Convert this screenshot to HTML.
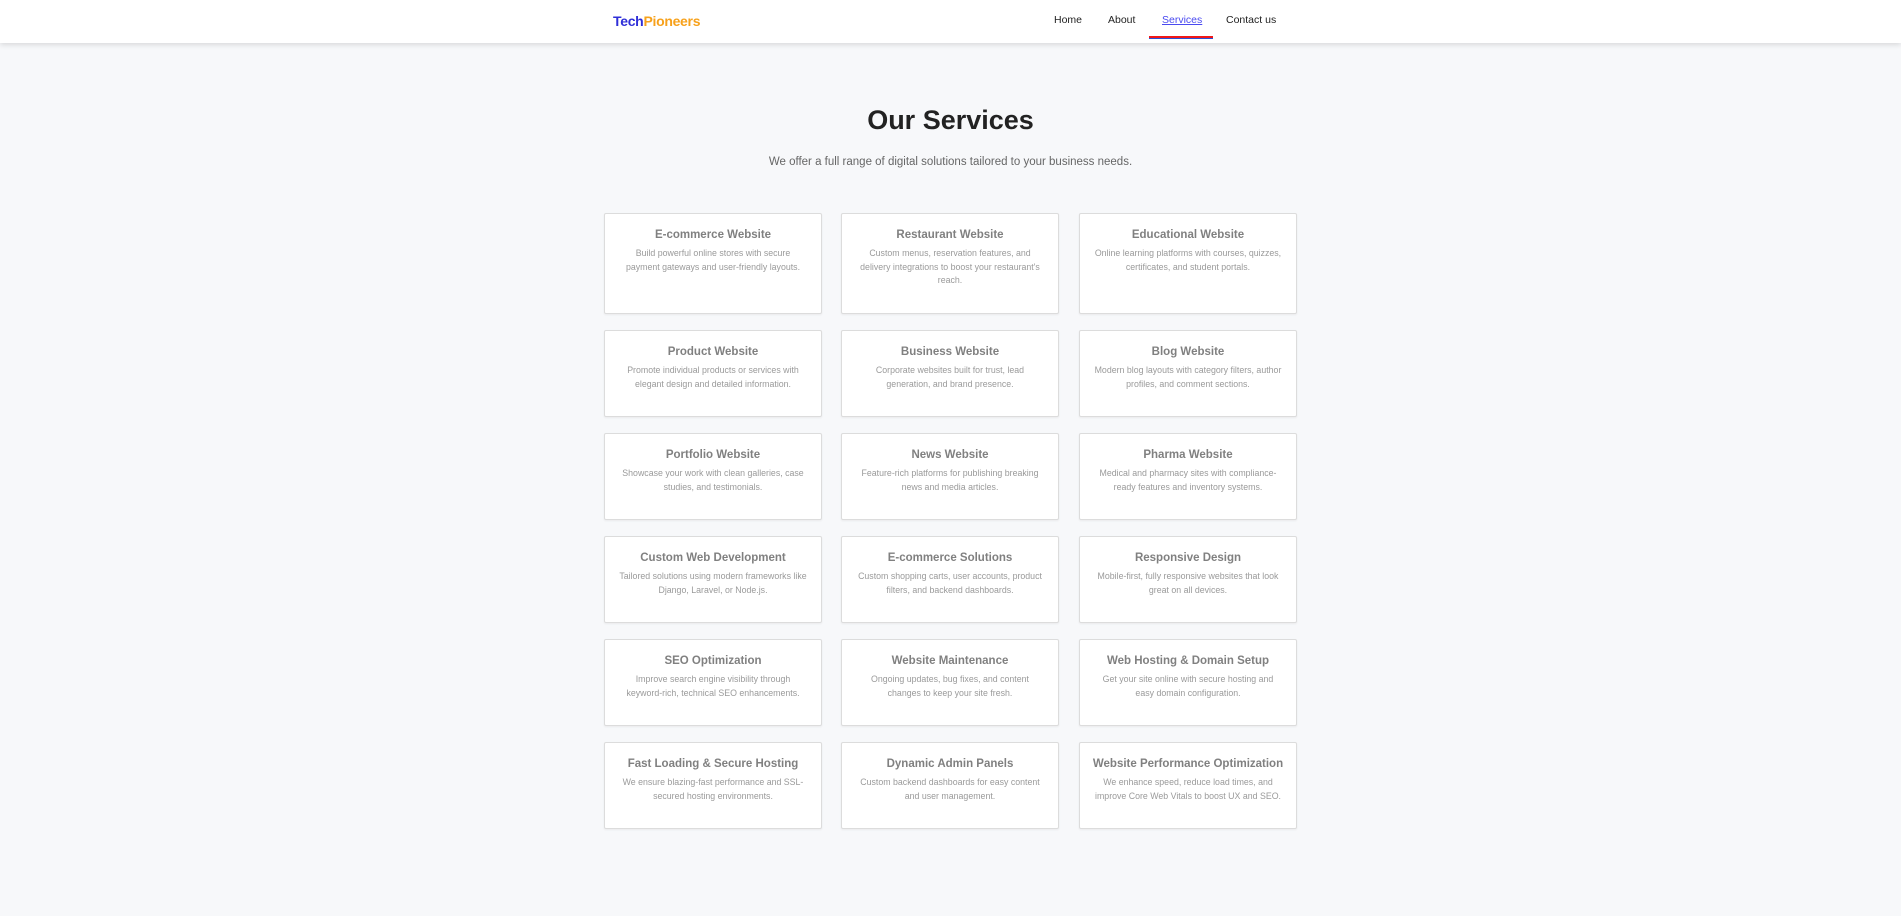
<!DOCTYPE html>
<html><head><meta charset="utf-8"><style>
*{margin:0;padding:0;box-sizing:border-box}
body{width:1901px;height:916px;background:#f7f8fa;font-family:"Liberation Sans",sans-serif;position:relative;overflow:hidden}
.nav{position:absolute;left:0;top:0;width:1901px;height:43px;background:#fff;box-shadow:0 2px 5px rgba(0,0,0,.12)}
.logo{position:absolute;left:613px;top:13px;font-weight:bold;font-size:14px;letter-spacing:-0.3px}
.logo .a{color:#2f2fd8}.logo .b{color:#f7a11b}
.nav a{position:absolute;top:14px;font-size:10.5px;color:#222;text-decoration:none}
.nav a.act{color:#4a4af0;text-decoration:underline}
.bar{position:absolute;left:1149px;top:36px;width:64px;height:3px;background:#f01818;border-bottom:1px solid #2a4fd8}
h1{position:absolute;left:0;width:1901px;top:105px;text-align:center;font-size:27px;color:#222;font-weight:bold}
.sub{position:absolute;left:0;width:1901px;top:156px;text-align:center;font-size:11.5px;color:#666}
.card{position:absolute;width:218px;background:#fff;border:1px solid #dcdcdc;border-radius:2px;box-shadow:0 1px 2px rgba(0,0,0,.06);text-align:center;padding:15px 14px 0}
.card h3{font-size:11.5px;color:#808080;font-weight:bold;margin-bottom:6px;white-space:nowrap;margin-left:-10px;margin-right:-10px}
.card p{font-size:8.8px;line-height:13.5px;color:#9a9a9a}
</style></head><body>
<div class="nav">
<div class="logo"><span class="a">Tech</span><span class="b">Pioneers</span></div>
<a style="left:1054px">Home</a>
<a style="left:1108px">About</a>
<a class="act" style="left:1162px">Services</a>
<a style="left:1226px">Contact us</a>
<div class="bar"></div>
</div>
<h1>Our Services</h1>
<div class="sub">We offer a full range of digital solutions tailored to your business needs.</div>

<div class="card" style="left:604px;top:213px;height:101px"><h3>E-commerce Website</h3><p>Build powerful online stores with secure payment gateways and user-friendly layouts.</p></div>
<div class="card" style="left:841px;top:213px;height:101px"><h3>Restaurant Website</h3><p>Custom menus, reservation features, and delivery integrations to boost your restaurant's reach.</p></div>
<div class="card" style="left:1079px;top:213px;height:101px"><h3>Educational Website</h3><p>Online learning platforms with courses, quizzes, certificates, and student portals.</p></div>

<div class="card" style="left:604px;top:330px;height:87px"><h3>Product Website</h3><p>Promote individual products or services with elegant design and detailed information.</p></div>
<div class="card" style="left:841px;top:330px;height:87px"><h3>Business Website</h3><p>Corporate websites built for trust, lead generation, and brand presence.</p></div>
<div class="card" style="left:1079px;top:330px;height:87px"><h3>Blog Website</h3><p>Modern blog layouts with category filters, author profiles, and comment sections.</p></div>

<div class="card" style="left:604px;top:433px;height:87px"><h3>Portfolio Website</h3><p>Showcase your work with clean galleries, case studies, and testimonials.</p></div>
<div class="card" style="left:841px;top:433px;height:87px"><h3>News Website</h3><p>Feature-rich platforms for publishing breaking news and media articles.</p></div>
<div class="card" style="left:1079px;top:433px;height:87px"><h3>Pharma Website</h3><p>Medical and pharmacy sites with compliance-ready features and inventory systems.</p></div>

<div class="card" style="left:604px;top:536px;height:87px"><h3>Custom Web Development</h3><p>Tailored solutions using modern frameworks like Django, Laravel, or Node.js.</p></div>
<div class="card" style="left:841px;top:536px;height:87px"><h3>E-commerce Solutions</h3><p>Custom shopping carts, user accounts, product filters, and backend dashboards.</p></div>
<div class="card" style="left:1079px;top:536px;height:87px"><h3>Responsive Design</h3><p>Mobile-first, fully responsive websites that look great on all devices.</p></div>

<div class="card" style="left:604px;top:639px;height:87px"><h3>SEO Optimization</h3><p>Improve search engine visibility through keyword-rich, technical SEO enhancements.</p></div>
<div class="card" style="left:841px;top:639px;height:87px"><h3>Website Maintenance</h3><p>Ongoing updates, bug fixes, and content changes to keep your site fresh.</p></div>
<div class="card" style="left:1079px;top:639px;height:87px"><h3>Web Hosting &amp; Domain Setup</h3><p>Get your site online with secure hosting and easy domain configuration.</p></div>

<div class="card" style="left:604px;top:742px;height:87px"><h3>Fast Loading &amp; Secure Hosting</h3><p>We ensure blazing-fast performance and SSL-secured hosting environments.</p></div>
<div class="card" style="left:841px;top:742px;height:87px"><h3>Dynamic Admin Panels</h3><p>Custom backend dashboards for easy content and user management.</p></div>
<div class="card" style="left:1079px;top:742px;height:87px"><h3>Website Performance Optimization</h3><p>We enhance speed, reduce load times, and improve Core Web Vitals to boost UX and SEO.</p></div>
</body></html>
